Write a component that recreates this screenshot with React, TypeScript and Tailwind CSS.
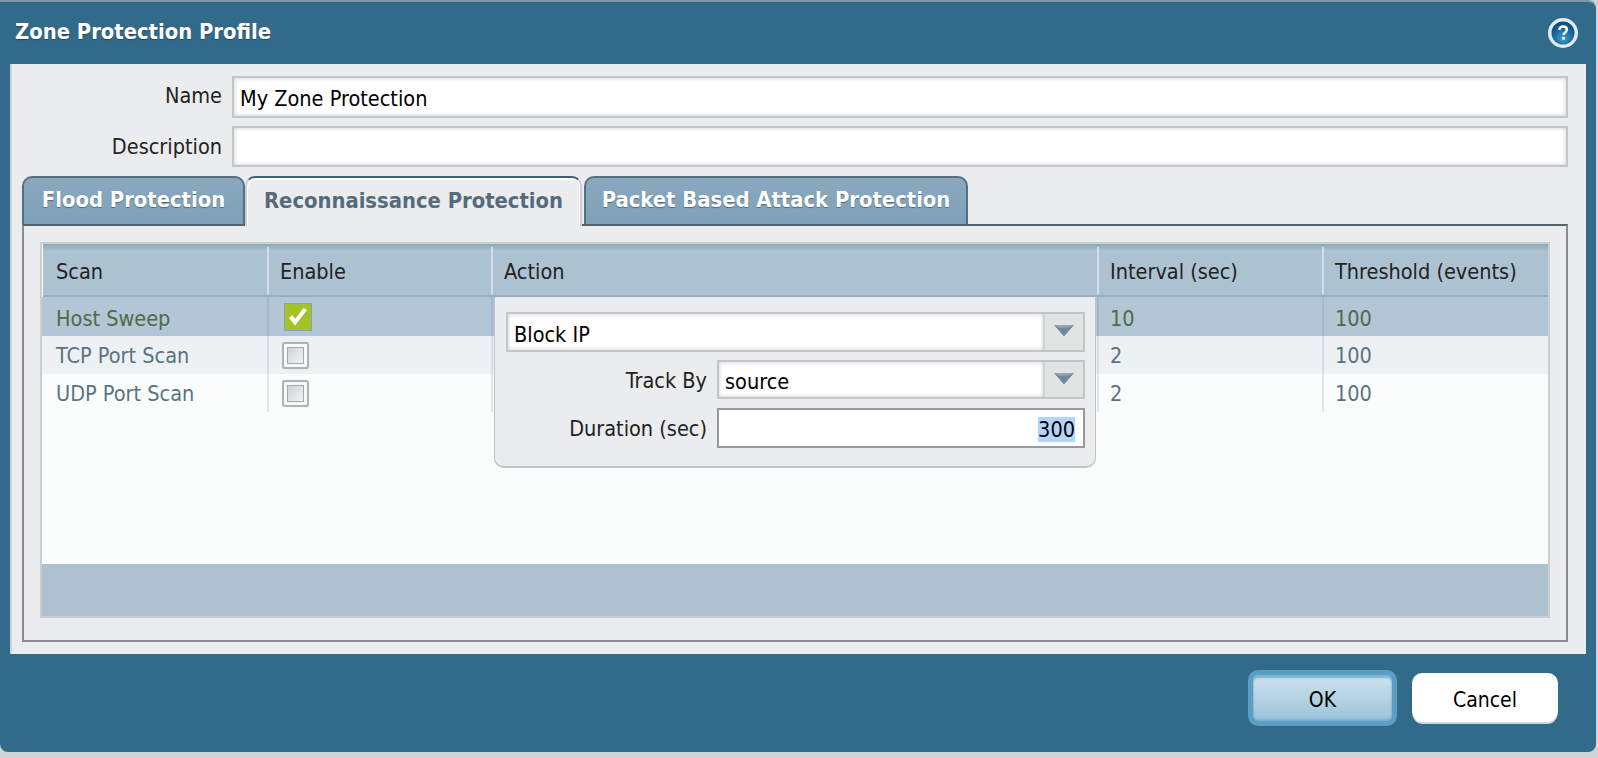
const F = "[font-family:'DejaVu_Sans_Condensed','DejaVu_Sans',sans-serif]";

function Arrow() {
  return (
    <svg width="22" height="13" viewBox="0 0 22 13">
      <path d="M1 1H21L11 12.500Z" fill="#6f8a9d" />
      <path d="M1 1H21L15 3.500H6Z" fill="#93a8b6" />
    </svg>
  );
}

function HelpIcon() {
  return (
    <svg width="32" height="32" viewBox="0 0 32 32">
      <defs>
        <radialGradient id="h" cx="50%" cy="72%" r="62%">
          <stop offset="0%" stopColor="#4c9dcb" />
          <stop offset="55%" stopColor="#1d6ea3" />
          <stop offset="100%" stopColor="#0a4f80" />
        </radialGradient>
      </defs>
      <circle cx="16" cy="16" r="15" fill="#dfeaf1" />
      <circle cx="16" cy="16" r="11.500" fill="url(#h)" />
      <path d="M12.200 13c.3-2.300 1.900-3.500 3.900-3.500 2.300 0 3.800 1.300 3.800 3.100 0 1.600-.9 2.300-2 3.100-.9.600-1.300 1.100-1.300 2.300" fill="none" stroke="#fff" strokeWidth="2.400" />
      <rect x="15.200" y="20" width="2.700" height="2.700" fill="#fff" />
    </svg>
  );
}

function Field({ children, className = "" }: { children?: React.ReactNode; className?: string }) {
  return (
    <div className={`border-2 border-[#c3c6c6] bg-white shadow-[inset_0_0_4px_rgba(0,0,0,0.22)] flex items-center ${className}`}>
      {children}
    </div>
  );
}

function Select({ value, className = "", textPad = "pt-[5px]" }: { value: string; className?: string; textPad?: string }) {
  return (
    <div className={`border-2 border-[#c3c6c6] bg-white flex items-stretch ${className}`}>
      <div className={`flex-1 flex items-center pl-[6px] ${textPad} text-[21.5px] text-black shadow-[inset_0_0_4px_rgba(0,0,0,0.2)]`}>{value}</div>
      <div className="w-[40px] bg-[#e2e4e4] border-l-2 border-[#d0d2d2] flex items-center justify-center pb-[3px]">
        <Arrow />
      </div>
    </div>
  );
}

const rows = [
  { name: "Host Sweep", interval: "10", threshold: "100", bg: "bg-[#b2c6d5]", text: "text-[#4f6b47]", sep: "border-[#a3b9c9]", on: true, h: "h-[39px]", pad: "pt-[5px]" },
  { name: "TCP Port Scan", interval: "2", threshold: "100", bg: "bg-[#edf1f4]", text: "text-[#5a7282]", sep: "border-[#d5dde2]", on: false, h: "h-[38px]", pad: "pt-[2px]" },
  { name: "UDP Port Scan", interval: "2", threshold: "100", bg: "bg-[#fbfdfd]", text: "text-[#5a7282]", sep: "border-[#dfe5e8]", on: false, h: "h-[38px]", pad: "pt-[2px]" },
];

function Check({ on }: { on: boolean }) {
  if (on) {
    return (
      <div className="w-[28px] h-[28px] ml-[15px] border border-[#8aa0bb] bg-[#a4c327] flex items-center justify-center">
        <svg width="24" height="24" viewBox="0 0 24 24">
          <path d="M3 13L9 20.500L21 5L17.500 3L9 14L6.200 10Z" fill="#fff" />
        </svg>
      </div>
    );
  }
  return (
    <div className="w-[27px] h-[27px] ml-[13px] border-2 border-[#b0b2b3] rounded-[3px] bg-[#f7f8f9] p-[3px] shadow-[0_0_1px_rgba(0,0,0,0.2)]">
      <div className="w-full h-full bg-gradient-to-br from-[#ccd0d9] to-[#f3f4f6] border border-[#a5a7a9]" />
    </div>
  );
}

const cols = ["w-[224px]", "w-[224px]", "w-[606px]", "w-[225px]", "w-[224px]"];

function Tab({ label, active, className }: { label: string; active?: boolean; className: string }) {
  return active ? (
    <div className={`h-[50px] rounded-t-[10px] border-2 border-b-0 border-[#c9ced2] border-t-[#3f5f74] bg-[#ebecee] shadow-[inset_1px_2px_0_#ffffff,inset_-1px_0_0_#ffffff] text-[#566b79] flex items-center justify-center font-bold text-[21.8px] pb-[2px] -mb-[2px] z-10 ${className}`}>
      {label}
    </div>
  ) : (
    <div className={`h-[48px] rounded-t-[10px] border-2 border-b-0 border-[#55707f] bg-gradient-to-b from-[#8aa9bf] to-[#7fa0b7] text-white [text-shadow:0_1px_1px_rgba(40,70,90,0.6)] flex items-center justify-center font-bold text-[21.8px] pb-[2px] ${className}`}>
      {label}
    </div>
  );
}

export default function App() {
  return (
    <div className={`w-[1598px] h-[758px] bg-[#d0d3d3] overflow-hidden ${F}`}>
      <div className="w-[1596px] h-[752px] bg-[#326a89] rounded-b-[8px] rounded-tr-[8px] border-t-2 border-[#7e97a5] flex flex-col">
        <div className="h-[62px] flex items-center justify-between pl-[15px] pr-[17px]">
          <span className="font-bold text-[21.8px] text-white -mt-[2px] [text-shadow:0_1px_1px_rgba(0,0,0,0.35)]">Zone Protection Profile</span>
          <HelpIcon />
        </div>

        <div className="mx-[10px] h-[590px] bg-[#ebecee] border-l-2 border-[#cfd2d4] pt-[12px] pl-[10px] pr-[18px]">
          <div className="flex items-center gap-[10px] h-[42px]">
            <div className="w-[200px] text-right text-[21.5px] text-[#222] -mt-[2px]">Name</div>
            <Field className="flex-1 h-[42px] pl-[6px] pt-[4px] text-[21.5px] text-black">My Zone Protection</Field>
          </div>
          <div className="flex items-center gap-[10px] h-[41px] mt-[8px]">
            <div className="w-[200px] text-right text-[21.5px] text-[#222] pt-[1px]">Description</div>
            <Field className="flex-1 h-[41px]" />
          </div>

          <div className="flex mt-[9px] relative">
            <Tab label="Flood Protection" className="w-[223px]" />
            <Tab label="Reconnaissance Protection" active className="w-[337px]" />
            <Tab label="Packet Based Attack Protection" className="w-[384px] ml-[2px]" />
          </div>

          <div className="h-[418px] border-2 border-[#8a8c8d] border-t-[#55636f] pt-[16px] pl-[16px] pr-[16px]">
            <div className="h-[376px] border-2 border-[#cbcdce] bg-[#fbfdfd] flex flex-col">
              <div className="h-[53px] flex bg-gradient-to-b from-[#8fa7b7] via-[#adc2d1] via-[14%] to-[#adc2d1] border-b-2 border-[#96aebf] pt-[3px] ml-[1px]">
                {["Scan", "Enable", "Action", "Interval (sec)", "Threshold (events)"].map((h, i) => (
                  <div key={h} className={`${cols[i]} flex items-center pt-[3px] text-[21.5px] text-[#222] ${i > 0 ? "border-l-2 border-[#d3dee6] pl-[11px]" : "pl-[13px]"}`}>
                    {h}
                  </div>
                ))}
              </div>
              <div className="flex flex-col relative">
                {rows.map((r) => (
                  <div key={r.name} className={`${r.h} flex ${r.bg} ${r.text} text-[21.5px]`}>
                    <div className={`w-[225px] flex items-center pl-[14px] ${r.pad}`}>{r.name}</div>
                    <div className={`${cols[1]} flex items-center border-l-2 ${r.sep}`}><Check on={r.on} /></div>
                    <div className={`${cols[2]} border-l-2 ${r.sep}`} />
                    <div className={`${cols[3]} flex items-center pl-[11px] ${r.pad} border-l-2 ${r.sep}`}>{r.interval}</div>
                    <div className={`${cols[4]} flex items-center pl-[11px] ${r.pad} border-l-2 ${r.sep}`}>{r.threshold}</div>
                  </div>
                ))}

                <div className="absolute left-[452px] top-0 w-[602px] h-[171px] bg-[#ebecee] border border-[#bfc3c6] border-t-0 border-b-2 rounded-b-[10px] pt-[15px] pl-[11px] pr-[10px]">
                  <Select value="Block IP" className="h-[40px]" textPad="pt-[6px]" />
                  <div className="flex items-center mt-[8px] gap-[10px]">
                    <div className="flex-1 text-right text-[21.5px] text-[#222] pt-[3px]">Track By</div>
                    <Select value="source" className="w-[368px] h-[39px]" />
                  </div>
                  <div className="flex items-center mt-[9px] gap-[10px]">
                    <div className="flex-1 text-right text-[21.5px] text-[#222] pt-[2px]">Duration (sec)</div>
                    <div className="w-[368px] h-[40px] border-2 border-[#97999a] bg-white flex items-center justify-end pr-[8px] pt-[2px] text-[21.5px] text-black">
                      <span className="bg-[#b3d4fc] h-[25px] leading-[25px]">300</span>
                    </div>
                  </div>
                </div>
              </div>
              <div className="flex-1" />
              <div className="h-[52px] bg-[#adc1cf]" />
            </div>
          </div>
        </div>

        <div className="flex-1 flex justify-end items-start pt-[16px] pr-[38px] gap-[15px]">
          <button className="w-[149px] h-[56px] pt-[6px] rounded-[10px] border-[5px] border-[#5a9ec4] bg-gradient-to-b from-[#cfe2ed] via-[#b6d3e3] to-[#9bc3da] shadow-[inset_0_3px_2px_rgba(90,158,196,0.7),inset_0_-2px_2px_rgba(90,158,196,0.5)] text-[21px] text-black">OK</button>
          <button className="w-[146px] h-[49px] pt-[6px] mt-[3px] rounded-[10px] bg-white shadow-[0_3px_0_-1px_#c9d8e2] text-[21px] text-black">Cancel</button>
        </div>
      </div>
    </div>
  );
}
